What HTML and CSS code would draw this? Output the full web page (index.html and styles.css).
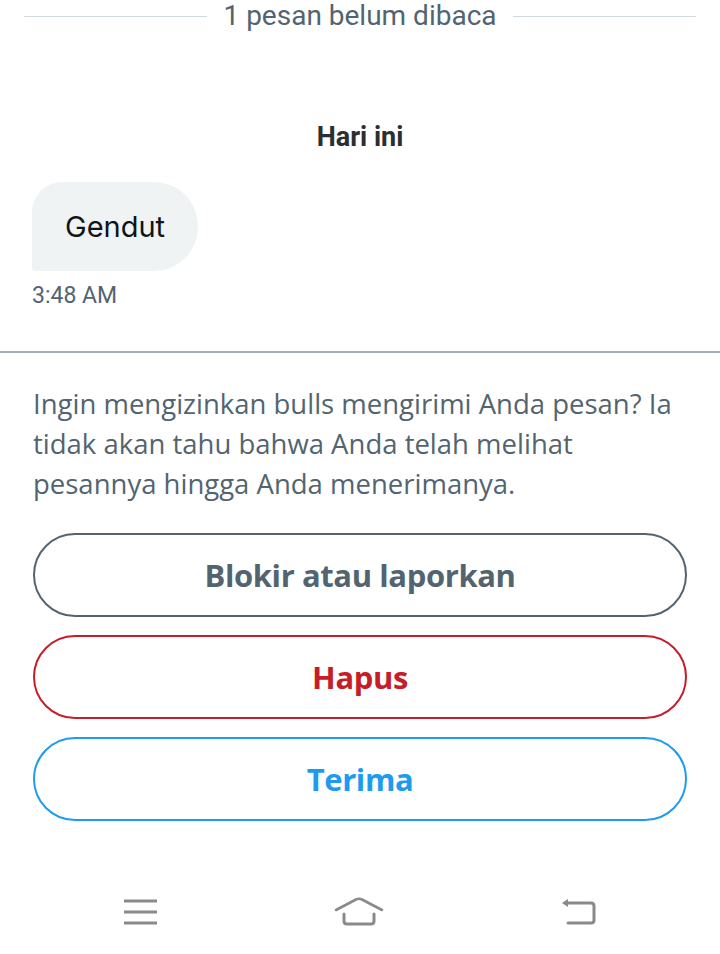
FILE: index.html
```html
<!DOCTYPE html>
<html lang="id">
<head>
    <meta charset="UTF-8">
    <meta name="viewport" content="width=device-width, initial-scale=1.0">
    <title>Pesan</title>
    <link rel="stylesheet" href="styles.css">
</head>
<body>
    <div class="unread">
        <span class="unread-line"></span>
        <span class="unread-text">1 pesan belum dibaca</span>
        <span class="unread-line"></span>
    </div>

    <div class="day">Hari ini</div>

    <div class="message">
        <div class="bubble">Gendut</div>
        <div class="time">3:48 AM</div>
    </div>

    <div class="request">
        <p class="request-text">Ingin mengizinkan bulls mengirimi Anda pesan? Ia tidak akan tahu bahwa Anda telah melihat pesannya hingga Anda menerimanya.</p>
        <button class="pill pill-block">Blokir atau laporkan</button>
        <button class="pill pill-delete">Hapus</button>
        <button class="pill pill-accept">Terima</button>
    </div>

    <div class="navbar">
        <svg class="nav-icon" width="40" height="34" viewBox="0 0 40 34">
            <path d="M4 6 H37 M4 17 H37 M4 28 H37" stroke="#8a8a8a" stroke-width="3" fill="none"/>
        </svg>
        <svg class="nav-icon" width="52" height="34" viewBox="0 0 52 34">
            <path d="M3 15 L23 4.5 Q26 3 29 4.5 L49 15" stroke="#8a8a8a" stroke-width="2.6" fill="none" stroke-linecap="round"/>
            <path d="M11 19 V26 Q11 29 14 29 H38 Q41 29 41 26 V19" stroke="#8a8a8a" stroke-width="3" fill="none" stroke-linecap="round"/>
        </svg>
        <svg class="nav-icon" width="40" height="34" viewBox="0 0 40 34">
            <path d="M8 8 H33 Q36 8 36 11 V25 Q36 28 33 28 H10" stroke="#8a8a8a" stroke-width="3" fill="none" stroke-linecap="round"/>
            <path d="M4 8 L10 4 V12 Z" fill="#8a8a8a"/>
        </svg>
    </div>
</body>
</html>
```

FILE: styles.css
```css
body {
    margin: 0;
    background-color: #fff;
    font-family: Roboto, "Liberation Sans", sans-serif;
    color: #0f1419;
}
.unread {
    display: flex;
    align-items: center;
    gap: 16px;
    padding: 0 24px;
    height: 32px;
}
.unread-line {
    flex: 1;
    height: 1px;
    background-color: #cfd9de;
}
.unread-text {
    font-size: 28px;
    line-height: 32px;
    color: #536471;
}
.day {
    margin-top: 89px;
    line-height: 32px;
    text-align: center;
    font-size: 27px;
    font-weight: bold;
    color: #2b2f33;
}
.message {
    padding: 0 32px;
    margin-top: 29px;
    height: 169px;
}
.bubble {
    display: inline-block;
    background-color: #eff3f4;
    padding: 0 33px;
    height: 89px;
    line-height: 89px;
    font-family: Inter, "Noto Sans", sans-serif;
    font-size: 29px;
    border-radius: 30px 44px 44px 4px;
}
.time {
    margin-top: 11px;
    line-height: 27px;
    font-size: 23px;
    color: #536471;
}
.request {
    border-top: 2px solid #a3aeb7;
    padding: 31px 33px 0;
    display: flex;
    flex-direction: column;
    gap: 18px;
}
.request-text {
    margin: 0 0 11px;
    font-family: "Open Sans", sans-serif;
    font-size: 27.5px;
    line-height: 40px;
    color: #536471;
}
.pill {
    height: 84px;
    border-radius: 42px;
    background: #fff;
    font-family: "Open Sans", sans-serif;
    font-size: 31px;
    font-weight: bold;
    letter-spacing: -0.4px;
}
.pill-block {
    border: 2px solid #536471;
    color: #536471;
}
.pill-delete {
    border: 2px solid #c61d2b;
    color: #c61d2b;
}
.pill-accept {
    border: 2px solid #1d9bf0;
    color: #1d9bf0;
}
.navbar {
    margin-top: 74px;
    display: flex;
    justify-content: space-between;
    padding: 0 122px 0 120px;
}
```
